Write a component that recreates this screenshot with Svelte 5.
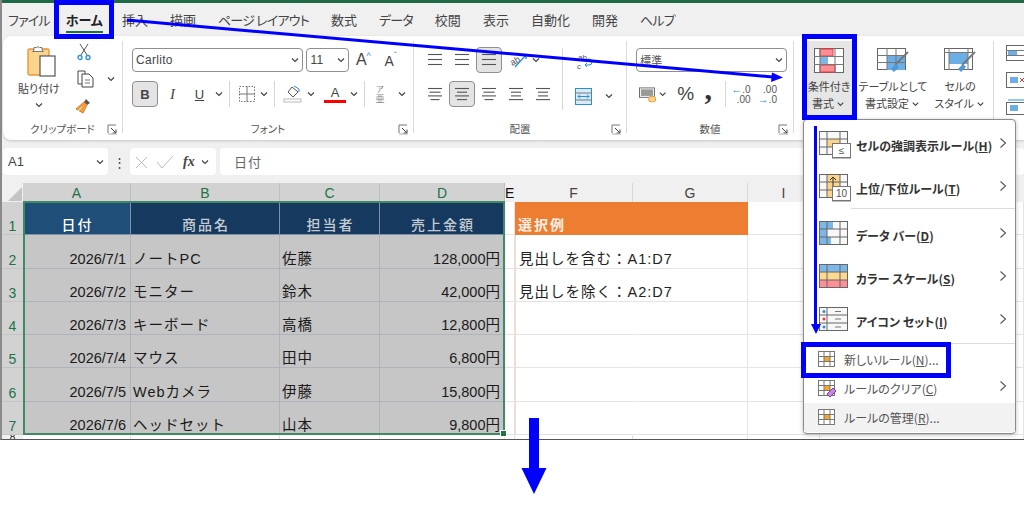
<script lang="ts">
  const tabs = ['ファイル', 'ホーム', '挿入', '描画', 'ページ レイアウト', '数式', 'データ', '校閲', '表示', '自動化', '開発', 'ヘルプ'];
  const kanaTabs = ['ファイル', 'ページ レイアウト', 'データ', 'ヘルプ'];
  const columns = [
    { name: 'A', selected: true },
    { name: 'B', selected: true },
    { name: 'C', selected: true },
    { name: 'D', selected: true },
    { name: 'E', selected: false },
    { name: 'F', selected: false },
    { name: 'G', selected: false },
    { name: 'I', selected: false }
  ];
  const rows = [
    ['2026/7/1', 'ノートPC', '佐藤', '128,000円', '見出しを含む：A1:D7'],
    ['2026/7/2', 'モニター', '鈴木', '42,000円', '見出しを除く：A2:D7'],
    ['2026/7/3', 'キーボード', '高橋', '12,800円', ''],
    ['2026/7/4', 'マウス', '田中', '6,800円', ''],
    ['2026/7/5', 'Webカメラ', '伊藤', '15,800円', ''],
    ['2026/7/6', 'ヘッドセット', '山本', '9,800円', '']
  ];
  const heads = ['日付', '商品名', '担当者', '売上金額'];
  const menuTop = [
    { label: 'セルの強調表示ルール', key: 'H', kind: 'highlight' },
    { label: '上位/下位ルール', key: 'T', kind: 'top', rule: true },
    { label: 'データ バー', key: 'D', kind: 'bars' },
    { label: 'カラー スケール', key: 'S', kind: 'scale' },
    { label: 'アイコン セット', key: 'I', kind: 'icons' }
  ];
  const menuBottom = [
    { label: 'ルールのクリア', key: 'C', suffix: '', sub: true, kind: 'clear' },
    { label: 'ルールの管理', key: 'R', suffix: '...', sub: false, kind: 'manage', hover: true }
  ];
</script>

{#snippet chev(w = 12)}
  <svg class="chev" width={w} height="10" viewBox="0 0 12 10"><path d="M3 3.5 6 6.5 9 3.5" fill="none" stroke="#444" stroke-width="1.2" /></svg>
{/snippet}

{#snippet launcher()}
  <svg class="launcher" width="11" height="11" viewBox="0 0 11 11"><path d="M1 9V1h8" fill="none" stroke="#777" /><path d="M4 4l5 5M9 5.5V9H5.5" fill="none" stroke="#444" /><path d="M1 10h9" stroke="#aaa" /></svg>
{/snippet}

{#snippet lines(widths: number[], active = false)}
  <span class="tool square" class:active>
    <svg width="18" height="16" viewBox="0 0 18 16">
      {#each widths as w, i}
        <path d="M{(18 - w) / 2} {2.5 + i * (widths.length === 3 ? 5 : 3.7)}h{w}" stroke="#555" stroke-width="1.1" />
      {/each}
    </svg>
  </span>
{/snippet}

{#snippet sheet(kind: string)}
  <svg width="29" height="24" viewBox="0 0 29 24">
    <rect x="0.5" y="0.5" width="28" height="23" fill="#f8f8f8" stroke="#666" />
    {#if kind === 'highlight'}<rect x="8" y="8" width="13" height="8" fill="#fbd38a" />{/if}
    {#if kind === 'top'}<rect x="8" y="1" width="13" height="22" fill="#fbd38a" />{/if}
    {#if kind === 'bars'}
      <rect x="1" y="1" width="13" height="7" fill="#7db7e8" /><rect x="1" y="8" width="7" height="8" fill="#7db7e8" /><rect x="1" y="16" width="11" height="7" fill="#7db7e8" />
    {/if}
    {#if kind === 'scale'}
      <rect x="1" y="1" width="27" height="7" fill="#7db7e8" /><rect x="1" y="8" width="27" height="8" fill="#fbd98f" /><rect x="1" y="16" width="27" height="7" fill="#ff8f96" />
    {/if}
    <path d="M0 8h29M0 16h29M8 0v24M21 0v24" stroke="#666" stroke-width="1" fill="none" />
    {#if kind === 'icons'}
      <rect x="1" y="1" width="27" height="22" fill="#f8f8f8" />
      <path d="M0 8h29M0 16h29M8 0v24" stroke="#666" fill="none" />
      <circle cx="5" cy="4.5" r="1.5" fill="#2b8fd8" /><circle cx="5" cy="12" r="1.5" fill="#e8383d" /><circle cx="5" cy="20" r="1.5" fill="#2b8fd8" />
      <path d="M16 4.5h6M16 12h6M16 20h6" stroke="#777" />
    {/if}
    {#if kind === 'top'}<path d="M14 13V3M11 6l3-3 3 3" stroke="#333" fill="none" />{/if}
  </svg>
{/snippet}

{#snippet smallSheet(kind: string)}
  <svg width="20" height="18" viewBox="0 0 20 18">
    <rect x="0.5" y="0.5" width="16" height="15" fill="#fff" stroke="#777" />
    <rect x="6" y="5.5" width="6" height="5" fill="#f5a623" />
    <path d="M0 5.5h17M0 10.5h17M6 0v16M12 0v16" stroke="#777" fill="none" />
    {#if kind === 'clear'}<path d="M9 14l6-6 3 3-6 6z" fill="#c58ae0" stroke="#7a3aa5" />{/if}
  </svg>
{/snippet}

<div class="page">
  <div class="window">
    <div class="accent"></div>
    <nav class="tabs">
      {#each tabs as tab}
        <span class="tab" class:current={tab === 'ホーム'} class:kana={kanaTabs.includes(tab)}>{tab}</span>
      {/each}
    </nav>

    <div class="ribbon">
      <section class="group clipboard">
        <div class="body clip-body">
          <div class="paste">
            <svg class="paste-icon" width="29" height="34" viewBox="0 0 29 34">
              <rect x="1" y="5" width="21" height="26" rx="1.5" fill="#fbd38a" stroke="#e8973a" stroke-width="1.4" />
              <path d="M7 6V3.5h2.5a2 2 0 0 1 3 0H15V6l1.500 1.500h-11z" fill="#fff" stroke="#777" />
              <rect x="13" y="12" width="15" height="20" fill="#fff" stroke="#555" stroke-width="1.2" />
            </svg>
            <span class="label">貼り付け</span>
            {@render chev()}
          </div>
          <div class="clip-tools">
            <svg width="14" height="18" viewBox="0 0 14 18"><path d="M3 1l7 11M11 1L4 12" stroke="#555" fill="none" /><circle cx="3" cy="14.5" r="2" fill="none" stroke="#2b8fd8" stroke-width="1.3" /><circle cx="11" cy="14.5" r="2" fill="none" stroke="#2b8fd8" stroke-width="1.3" /></svg>
            <span class="copy">
              <svg width="18" height="18" viewBox="0 0 18 18"><path d="M5 14H1V1h7v3" fill="#fff" stroke="#444" /><path d="M5 4h7l4 4v9H5z" fill="#fff" stroke="#444" /><path d="M8 10h5M8 13h5" stroke="#777" /></svg>
              {@render chev()}
            </span>
            <svg width="18" height="17" viewBox="0 0 18 17"><path d="M11 2l4 4-3 2-3-3z" fill="#555" /><path d="M9 5l3 3-4 8-7-4z" fill="#f0a040" stroke="#e07b20" /><path d="M3 14l4-4" stroke="#fff" /></svg>
          </div>
        </div>
        <footer><span>クリップボード</span>{@render launcher()}</footer>
      </section>

      <section class="group font">
        <div class="body stack">
          <div class="row">
            <span class="select font-name"><b>Carlito</b>{@render chev()}</span>
            <span class="select font-size"><b>11</b>{@render chev()}</span>
            <span class="grow"><i class="big">A</i><em>^</em></span>
            <span class="grow shrink"><i>A</i><em>ˇ</em></span>
          </div>
          <div class="row tools">
            <span class="tool square active bold">B</span>
            <span class="tool w27 italic">I</span>
            <span class="tool w27 under">U</span>
            {@render chev()}
            <span class="vsep"></span>
            <svg class="gap" width="18" height="18" viewBox="0 0 18 18"><rect x="1.5" y="1.5" width="15" height="15" fill="none" stroke="#777" stroke-dasharray="1.5 1.5" /><path d="M9 1v16M1 9h16" stroke="#777" /></svg>
            {@render chev()}
            <span class="vsep"></span>
            <svg class="gap" width="20" height="18" viewBox="0 0 20 18"><path d="M9 2l6 5-5 5-5-5z" fill="#fff" stroke="#555" /><path d="M11 1l5 3v3" fill="none" stroke="#2b8fd8" /><rect x="1" y="14" width="17" height="3" fill="#fff" stroke="#bbb" /></svg>
            {@render chev()}
            <span class="color-a">A</span>
            {@render chev()}
            <span class="vsep"></span>
            <span class="furi"><small>ア</small>亜</span>
            {@render chev()}
          </div>
        </div>
        <footer><span>フォント</span>{@render launcher()}</footer>
      </section>

      <section class="group align">
        <div class="body align-body">
          <div class="stack">
            <div class="row lines-row">
              {@render lines([14, 14, 14])}
              {@render lines([14, 14, 14])}
              {@render lines([14, 14, 14], true)}
              <svg class="angle" width="20" height="18" viewBox="0 0 20 18"><text x="1" y="13" font-size="9" fill="#555" font-family="Liberation Sans" transform="rotate(-30 6 10)">ab</text><path d="M6 16L17 4M13 4h4v4" fill="none" stroke="#2b8fd8" stroke-width="1.3" /></svg>
              {@render chev()}
            </div>
            <div class="row lines-row tools">
              {@render lines([14, 11, 14, 9])}
              {@render lines([14, 10, 14, 10], true)}
              {@render lines([14, 11, 14, 9])}
              {@render lines([14, 10, 10, 14])}
              {@render lines([14, 10, 10, 14])}
            </div>
          </div>
          <span class="vsep tall"></span>
          <div class="stack wrap-col">
            <svg width="20" height="18" viewBox="0 0 20 18"><text x="3" y="8" font-size="8" fill="#555" font-family="Liberation Sans">ab</text><text x="2" y="17" font-size="8" fill="#555" font-family="Liberation Sans">c</text><path d="M10 13h4a3 3 0 0 0 0-6h-1M12 11l-2 2 2 2" fill="none" stroke="#2b8fd8" /></svg>
            <div class="row merge">
              <svg width="17" height="17" viewBox="0 0 17 17"><rect x="0.5" y="0.5" width="16" height="16" fill="#d7ecfb" stroke="#2b8fd8" /><path d="M0 5h17M0 12h17" stroke="#777" /><path d="M3 8.5h11M5 6.5l-2 2 2 2M12 6.5l2 2-2 2" fill="none" stroke="#2b8fd8" /></svg>
              {@render chev()}
            </div>
          </div>
        </div>
        <footer><span>配置</span>{@render launcher()}</footer>
      </section>

      <section class="group number">
        <div class="body stack">
          <span class="select num-format"><b>標準</b>{@render chev()}</span>
          <div class="row tools num-tools">
            <svg width="19" height="17" viewBox="0 0 19 17"><rect x="0.5" y="1.5" width="16" height="10" fill="#fff" stroke="#666" /><rect x="2" y="3" width="13" height="7" fill="#999" /><ellipse cx="14" cy="12" rx="3.5" ry="1.5" fill="#fbd38a" stroke="#e8973a" /><path d="M10.5 12v3.5c0 1 7 1 7 0V12" fill="#fbd38a" stroke="#e8973a" /></svg>
            {@render chev()}
            <span class="percent">%</span>
            <span class="comma">,</span>
            <span class="vsep"></span>
            <span class="decimal"><u>←</u><b>.0</b><b class="line2">.00</b></span>
            <span class="decimal"><b class="line2">.00</b><u>→</u><b>.0</b></span>
          </div>
        </div>
        <footer><span>数値</span>{@render launcher()}</footer>
      </section>

      <section class="group styles">
        <div class="style-btn cond">
          <svg width="31" height="26" viewBox="0 0 31 26"><rect x="0.5" y="0.5" width="29" height="24" fill="#fff" stroke="#666" /><rect x="6" y="1" width="13" height="7" fill="#ff8f96" stroke="#e8383d" /><rect x="6" y="9" width="8" height="7" fill="#7db7e8" /><rect x="6" y="17" width="15" height="7" fill="#ff8f96" stroke="#e8383d" /><path d="M0 8.500h30M0 16.500h30M6 0v25M21 0v25" stroke="#777" fill="none" /></svg>
          <span class="label">条件付き<br />書式{@render chev(11)}</span>
        </div>
        <div class="style-btn table">
          <svg width="33" height="26" viewBox="0 0 33 26"><rect x="0.500" y="0.500" width="28" height="21" fill="#fff" stroke="#666" /><rect x="10" y="7" width="18" height="15" fill="#6caee6" /><path d="M0 7.500h29M0 14.500h29M10 0v22M19 0v22" stroke="#777" fill="none" /><path d="M31 4L18 17" stroke="#777" stroke-width="2" /><path d="M19 16l-5 5 3 3 5-5z" fill="#4c9ad8" /></svg>
          <span class="label">テーブルとして<br />書式設定{@render chev(11)}</span>
        </div>
        <div class="style-btn cell-style">
          <svg width="33" height="26" viewBox="0 0 33 26"><rect x="0.500" y="0.500" width="28" height="21" fill="#fff" stroke="#666" /><rect x="5" y="4" width="19" height="12" fill="#6caee6" /><path d="M0 4.500h29M5 0v22M24 0v22" stroke="#777" fill="none" /><path d="M31 4L18 17" stroke="#777" stroke-width="2" /><path d="M19 16l-5 5 3 3 5-5z" fill="#4c9ad8" /></svg>
          <span class="label">セルの<br />スタイル{@render chev(11)}</span>
        </div>
      </section>

      <section class="group cells">
        <svg width="20" height="16" viewBox="0 0 20 16"><rect x="0.500" y="0.500" width="20" height="15" fill="#fff" stroke="#666" /><rect x="2" y="5" width="9" height="5" fill="#6caee6" /><path d="M0 5.500h20M0 10.500h20" stroke="#777" /></svg>
        <svg width="20" height="16" viewBox="0 0 20 16"><rect x="0.500" y="0.500" width="20" height="15" fill="#fff" stroke="#666" /><rect x="4" y="5" width="8" height="6" fill="#6caee6" /><path d="M14 6l4 4M18 6l-4 4" stroke="#e8383d" /></svg>
        <svg width="20" height="16" viewBox="0 0 20 16"><rect x="0.500" y="3.500" width="20" height="12" fill="#fff" stroke="#666" /><rect x="4" y="6" width="8" height="6" fill="#6caee6" /><path d="M2 1h16" stroke="#2b8fd8" /></svg>
      </section>
    </div>

    <div class="formula">
      <div class="namebox"><span>A1</span>{@render chev(14)}</div>
      <span class="dots">⋮</span>
      <div class="fx-box">
        <svg width="15" height="14" viewBox="0 0 15 14"><path d="M2 2l11 11M13 2L2 13" stroke="#bbb" fill="none" /></svg>
        <svg width="18" height="14" viewBox="0 0 18 14"><path d="M1 7l5 6L17 1" stroke="#bbb" fill="none" /></svg>
        <i>fx</i>
        {@render chev()}
      </div>
      <div class="input">日付</div>
    </div>

    <div class="sheet">
      <div class="corner"><span></span></div>
      {#each columns as col}
        <div class="col-head" class:selected={col.selected} class:narrow={col.name === 'E'}>{col.name}</div>
      {/each}
      <div class="filler-head"></div>

      <div class="row-head selected">1</div>
      {#each heads as head}
        <div class="cell title" class:first={head === '日付'}>{head}</div>
      {/each}
      <div class="cell plain"></div>
      <div class="cell example">選択例</div>
      <div class="cell plain"></div>
      <div class="cell plain"></div>

      {#each rows as row, i}
        <div class="row-head selected">{i + 2}</div>
        <div class="cell sel num">{row[0]}</div>
        <div class="cell sel text">{row[1]}</div>
        <div class="cell sel text">{row[2]}</div>
        <div class="cell sel num">{row[3]}</div>
        <div class="cell plain"></div>
        <div class="cell plain text note">{row[4]}</div>
        <div class="cell plain"></div>
        <div class="cell plain"></div>
        <div class="cell plain"></div>
      {/each}

      <div class="row-head last">8</div>
      {#each Array(9) as _}
        <div class="cell plain last"></div>
      {/each}

      <div class="selection"><span class="handle"></span></div>
    </div>
  </div>

  <div class="menu">
    {#each menuTop as item}
      <div class="menu-item big" class:ruled={item.rule}>
        <span class="menu-icon">
          {@render sheet(item.kind)}
          {#if item.kind === 'highlight'}<span class="badge">≤</span>{/if}
          {#if item.kind === 'top'}<span class="badge">10</span>{/if}
        </span>
        <span class="menu-label">{item.label}(<u>{item.key}</u>)</span>
        <svg class="sub" width="8" height="12" viewBox="0 0 8 12"><path d="M1.500 1.500 6.500 6 1.500 10.500" fill="none" stroke="#555" stroke-width="1.100" /></svg>
      </div>
    {/each}
    <div class="menu-item small first-small">
      <span class="menu-icon-small">{@render smallSheet('new')}</span>
      <span>新しいルール(<u>N</u>)...</span>
    </div>
    {#each menuBottom as item}
      <div class="menu-item small" class:hover={item.hover}>
        <span class="menu-icon-small">{@render smallSheet(item.kind)}</span>
        <span>{item.label}(<u>{item.key}</u>){item.suffix}</span>
        {#if item.sub}
          <svg class="sub" width="8" height="12" viewBox="0 0 8 12"><path d="M1.500 1.500 6.500 6 1.500 10.500" fill="none" stroke="#555" stroke-width="1.100" /></svg>
        {/if}
      </div>
    {/each}
  </div>

  <!-- annotations drawn on top of the screenshot -->
  <span class="mark mark-home"></span>
  <span class="mark mark-cond"></span>
  <span class="mark mark-new"></span>
  <svg class="arrows" width="1024" height="521" viewBox="0 0 1024 521">
    <path d="M127 20 773 77" stroke="#0000ff" stroke-width="3" />
    <path d="M783 77.500 772 72.500 771 82z" fill="#0000ff" />
    <path d="M815.500 126V325" stroke="#0000ff" stroke-width="3" />
    <path d="M811 324h10l-5 10z" fill="#0000ff" />
    <path d="M529 418h10v52h-10z" fill="#0000ff" />
    <path d="M521.500 468h25l-12.500 26z" fill="#0000ff" />
  </svg>
</div>

<style>
  :global(body) {
    margin: 0;
    background: #fff;
  }

  .page {
    position: relative;
    width: 1024px;
    height: 521px;
    overflow: hidden;
    font-family: 'Noto Sans CJK JP', 'Noto Sans', sans-serif;
    color: #333;
  }

  .window {
    height: 440px;
    box-sizing: border-box;
    background: #f0f0f0;
    border-left: 2px solid #8a8a8a;
    border-bottom: 1px solid #555;
    overflow: hidden;
  }

  .accent {
    height: 3px;
    background: #1e6b45;
  }

  .tabs {
    display: flex;
    align-items: center;
    gap: 22px;
    height: 33px;
    padding-left: 6px;
    font-size: 13px;
    font-feature-settings: 'palt';
    color: #444;
  }

  .tab {
    position: relative;
    line-height: 30px;
  }

  .tab.kana {
    letter-spacing: -0.8px;
  }

  .tab.current {
    font-weight: 700;
    color: #222;
    margin: 0 -3px 0 -6px;
  }

  .tab.current::after {
    content: '';
    position: absolute;
    left: 0;
    right: 0;
    bottom: 2px;
    height: 2px;
    background: #1e7145;
  }

  .ribbon {
    display: flex;
    height: 104px;
    margin-left: 1px;
    background: #fff;
    border-radius: 8px 0 0 8px;
    box-shadow: 0 1px 3px rgba(0, 0, 0, 0.18);
    font-feature-settings: 'palt';
  }

  .group {
    position: relative;
    box-sizing: border-box;
    flex: none;
    height: 92px;
    margin-top: 5px;
    border-right: 1px solid #dcdcdc;
  }

  .group footer {
    position: absolute;
    left: 0;
    right: 0;
    bottom: -4px;
    text-align: center;
    font-size: 10.500px;
    line-height: 16px;
    color: #555;
  }

  .launcher {
    position: absolute;
    right: 4px;
    top: 3px;
  }

  .clipboard {
    width: 120px;
  }

  .clip-body {
    display: flex;
    padding-left: 15px;
    gap: 15px;
  }

  .paste {
    display: flex;
    flex-direction: column;
    align-items: center;
    padding-top: 3px;
  }

  .paste-icon {
    margin-left: 5px;
  }

  .paste .label {
    font-size: 11px;
    line-height: 14px;
    margin-top: 3px;
    color: #444;
  }

  .paste .chev {
    margin-top: 5px;
  }

  .clip-tools {
    display: flex;
    flex-direction: column;
    align-items: flex-start;
    gap: 9px;
    padding-top: 2px;
  }

  .clip-tools svg:first-child {
    margin-left: 2px;
  }

  .copy {
    display: flex;
    align-items: center;
    gap: 10px;
  }

  .font {
    width: 291px;
    padding-left: 9px;
  }

  .font .body,
  .number .body,
  .align-body {
    padding-top: 7px;
  }

  .stack {
    display: flex;
    flex-direction: column;
    gap: 9px;
  }

  .row {
    display: flex;
    align-items: center;
    height: 24px;
  }

  .row.tools {
    height: 26px;
  }

  .select {
    display: flex;
    align-items: center;
    justify-content: space-between;
    box-sizing: border-box;
    height: 24px;
    padding: 0 1px 0 3px;
    border: 1px solid #8f8f8f;
    border-radius: 4px;
    background: #fff;
  }

  .select b {
    font: 400 12px 'Liberation Sans', sans-serif;
    color: #444;
    letter-spacing: 0.300px;
  }

  .font-name {
    width: 174px;
    margin-right: 3px;
  }

  .font-size {
    width: 43px;
  }

  .grow {
    display: flex;
    align-items: flex-start;
    width: 29px;
    margin-left: 7px;
    font-family: 'Liberation Sans', sans-serif;
  }

  .grow.shrink {
    margin-left: 0;
  }

  .grow i {
    font-style: normal;
    font-size: 14px;
    line-height: 20px;
    margin-top: 2px;
    color: #444;
  }

  .grow i.big {
    font-size: 16px;
    margin-top: 0;
  }

  .grow em {
    font-style: normal;
    font-size: 9px;
    line-height: 12px;
    color: #2b8fd8;
  }

  .tool {
    display: inline-flex;
    align-items: center;
    justify-content: center;
    box-sizing: border-box;
    height: 26px;
    flex: none;
    font-family: 'Liberation Sans', sans-serif;
    font-size: 13px;
    color: #444;
  }

  .square {
    width: 26px;
    border: 1px solid transparent;
    border-radius: 4px;
  }

  .square.active {
    background: #e4e4e4;
    border-color: #8f8f8f;
  }

  .w27 {
    width: 27px;
  }

  .bold {
    font-weight: 700;
  }

  .italic {
    font-style: italic;
    font-family: 'Liberation Serif', serif;
    font-size: 15px;
    margin-left: 1px;
  }

  .under {
    text-decoration: underline;
  }

  .vsep {
    flex: none;
    width: 1px;
    height: 26px;
    margin: 0 5px 0 4px;
    background: #d6d6d6;
  }

  .vsep.tall {
    height: 62px;
    margin: 0 12px 0 6px;
  }

  .gap {
    margin-left: 3px;
    margin-right: 2px;
  }

  .color-a {
    box-sizing: border-box;
    width: 22px;
    margin-left: 7px;
    margin-right: 2px;
    text-align: center;
    font: 13px/15px 'Liberation Sans', sans-serif;
    color: #444;
    border-bottom: 3px solid #ff0000;
  }

  .furi {
    display: flex;
    flex-direction: column;
    align-items: center;
    width: 20px;
    margin: 0 6px 0 0;
    font-size: 9px;
    line-height: 10px;
    color: #888;
  }

  .furi small {
    font-size: 8px;
  }

  .align {
    width: 213px;
    padding-left: 8px;
  }

  .align-body {
    display: flex;
    align-items: flex-start;
  }

  .lines-row {
    gap: 1px;
  }

  .angle {
    margin-left: 6px;
  }

  .wrap-col {
    padding-top: 4px;
    gap: 14px;
  }

  .merge {
    gap: 11px;
  }

  .number {
    width: 167px;
    padding: 0 9px;
  }

  .num-format {
    width: 151px;
  }

  .num-format b {
    font-family: 'Noto Sans CJK JP', sans-serif;
    font-size: 11px;
    color: #555;
  }

  .num-tools {
    padding-left: 3px;
  }

  .percent {
    margin-left: 9px;
    width: 29px;
    font: 19px 'Liberation Sans', sans-serif;
    color: #444;
  }

  .comma {
    width: 18px;
    font: 700 30px/16px 'Liberation Serif', serif;
    color: #333;
    padding-bottom: 10px;
  }

  .decimal {
    display: grid;
    grid-template-columns: auto auto;
    justify-content: end;
    row-gap: 1px;
    width: 20px;
    margin-right: 7px;
    font: 10px/9px 'Liberation Sans', sans-serif;
  }

  .decimal b {
    font-weight: 400;
    color: #555;
  }

  .decimal u {
    text-decoration: none;
    color: #2b8fd8;
    font-size: 11px;
    line-height: 9px;
  }

  .decimal .line2 {
    grid-column: 1 / 3;
    text-align: right;
  }

  .styles {
    display: flex;
    width: 200px;
    padding-left: 10px;
  }

  .style-btn {
    display: flex;
    flex-direction: column;
    align-items: center;
    gap: 4px;
    width: 50px;
    padding-top: 7px;
    font-size: 11px;
    line-height: 17px;
    color: #444;
    white-space: nowrap;
  }

  .style-btn.table {
    width: 72px;
    margin-left: 3px;
  }

  .style-btn.cell-style {
    width: 62px;
  }

  .style-btn.cond {
    box-sizing: border-box;
    background: #e6e6e6;
    height: 74px;
  }

  .style-btn .label {
    text-align: center;
  }

  .style-btn .chev {
    vertical-align: -1px;
    margin-left: 1px;
  }

  .cells {
    display: flex;
    flex-direction: column;
    gap: 11px;
    padding: 4px 0 0 12px;
    border: 0;
    min-width: 30px;
  }

  .formula {
    display: flex;
    align-items: center;
    gap: 4px;
    height: 27px;
    margin-top: 8px;
    padding-left: 1px;
  }

  .namebox,
  .fx-box,
  .input {
    display: flex;
    align-items: center;
    height: 27px;
    box-sizing: border-box;
    background: #fff;
    border-radius: 4px;
  }

  .namebox {
    justify-content: space-between;
    width: 105px;
    padding: 0 1px 0 5px;
    font: 13px 'Liberation Sans', sans-serif;
    color: #444;
  }

  .dots {
    width: 14px;
    text-align: center;
    font-size: 13px;
    color: #444;
  }

  .fx-box {
    width: 86px;
    padding-left: 4px;
    gap: 7px;
  }

  .fx-box i {
    font: italic 700 14px 'Liberation Serif', serif;
    color: #444;
    margin: 0 -3px 0 2px;
  }

  .input {
    flex: 1;
    padding-left: 14px;
    font-size: 13px;
    letter-spacing: 1px;
    color: #666;
  }

  .sheet {
    position: relative;
    display: grid;
    grid-template-columns: 21px 108px 149px 100px 125px 10px 118px 115px 72px 1fr;
    grid-template-rows: 19px repeat(7, 33.300px) 1fr;
    height: 257px;
    margin-top: 8px;
    background: #fff;
    font-family: 'Liberation Sans', 'Noto Sans CJK JP', sans-serif;
    font-size: 14.500px;
    color: #222;
  }

  .corner {
    position: relative;
    background: #f0f0f0;
  }

  .corner span {
    position: absolute;
    right: 1px;
    bottom: 1px;
    border-style: solid;
    border-width: 0 0 14px 14px;
    border-color: transparent transparent #c4c4c4 transparent;
  }

  .col-head {
    display: flex;
    align-items: center;
    justify-content: center;
    background: #f0f0f0;
    border-right: 1px solid #d8d8d8;
    font-size: 14px;
    color: #444;
  }

  .col-head.selected {
    background: #d2d2d2;
    color: #217346;
    border-right-color: #bfbfbf;
  }

  .col-head.narrow {
    color: #111;
    justify-content: flex-start;
    border-right: 0;
  }

  .filler-head {
    background: #f0f0f0;
  }

  .row-head {
    display: flex;
    align-items: flex-end;
    justify-content: center;
    box-sizing: border-box;
    background: #f0f0f0;
    border-bottom: 1px solid #c4c4c4;
    font-size: 14px;
  }

  .row-head.selected {
    background: #d2d2d2;
    color: #217346;
  }

  .cell {
    display: flex;
    align-items: flex-end;
    box-sizing: border-box;
    padding: 0 3px 0 2px;
    line-height: 17px;
    white-space: nowrap;
    overflow: hidden;
    border-right: 1px solid #e4e4e4;
    border-bottom: 1px solid #e4e4e4;
  }

  .cell.title {
    justify-content: center;
    padding-left: 5px;
    background: #163a5f;
    border-color: #7f93a8;
    color: #c4cad0;
    font-family: 'Noto Sans CJK JP', sans-serif;
    font-size: 14px;
    line-height: 19px;
    font-weight: 500;
    letter-spacing: 2px;
  }

  .cell.title.first {
    background: #1f4e79;
    color: #fff;
  }

  .cell.example {
    grid-column: 7 / 9;
    background: #ed7d31;
    border-color: #ed7d31;
    color: #fdf0e6;
    font-family: 'Noto Sans CJK JP', sans-serif;
    font-size: 14px;
    line-height: 19px;
    font-weight: 700;
    padding-left: 3px;
    letter-spacing: 2px;
  }

  .cell.sel {
    background: #c6c6c6;
    border-color: #adb4bb;
    color: #1a1a1a;
  }

  .cell.num {
    justify-content: flex-end;
    padding-right: 4px;
  }

  .cell.text {
    letter-spacing: 1px;
  }

  .cell.note {
    padding-left: 3px;
    border-left: 1px solid #f8d8c0;
    overflow: visible;
    border-right-color: transparent;
  }

  .cell.last {
    border: 0;
    border-right: 1px solid #e4e4e4;
  }

  .row-head.last {
    align-items: flex-start;
    border: 0;
    font-size: 10px;
    line-height: 5px;
    overflow: hidden;
    color: #222;
  }

  .selection {
    position: absolute;
    left: 21px;
    top: 18px;
    width: 482px;
    height: 234px;
    box-sizing: border-box;
    border: 2px solid #3f8a64;
    pointer-events: none;
  }

  .handle {
    position: absolute;
    right: -4px;
    bottom: -4px;
    width: 5px;
    height: 5px;
    background: #217346;
    border: 1px solid #fff;
  }

  .menu {
    position: absolute;
    left: 803px;
    top: 119px;
    box-sizing: border-box;
    width: 213px;
    height: 315px;
    padding-top: 4px;
    background: #fff;
    border: 1px solid #8c8c8c;
    border-radius: 4px;
    box-shadow: 0 1px 4px rgba(0, 0, 0, 0.25);
    font-feature-settings: 'palt';
  }

  .menu-item {
    position: relative;
    display: flex;
    align-items: center;
    padding-left: 15px;
  }

  .menu-item.big {
    height: 43px;
    font-size: 12px;
    font-weight: 700;
    color: #333;
  }

  .menu-item.ruled {
    margin-bottom: 4px;
  }

  .menu-item.ruled::after {
    content: '';
    position: absolute;
    left: 47px;
    right: 0;
    bottom: 1px;
    height: 1px;
    background: #dcdcdc;
  }

  .menu-icon {
    position: relative;
    display: flex;
    width: 37px;
    margin-top: -5px;
  }

  .badge {
    position: absolute;
    left: 13px;
    top: 12px;
    box-sizing: border-box;
    width: 19px;
    height: 15px;
    background: #fff;
    border: 1px solid #777;
    box-shadow: 0 1px 0 #bbb;
    text-align: center;
    font: 400 10px/13px 'Liberation Sans', sans-serif;
    color: #555;
  }

  .menu-label {
    white-space: nowrap;
  }

  .menu-item u {
    text-underline-offset: 1px;
  }

  .sub {
    position: absolute;
    right: 8px;
    top: 50%;
    margin-top: -9px;
  }

  .menu-item.small {
    height: 29px;
    font-size: 12px;
    color: #555;
    padding-left: 14px;
  }

  .menu-item.first-small {
    margin-top: 2px;
  }

  .first-small::before {
    content: '';
    position: absolute;
    left: 0;
    right: 0;
    top: -2px;
    height: 1px;
    background: #dcdcdc;
  }

  .menu-icon-small {
    display: flex;
    width: 26px;
  }

  .menu-item.hover {
    background: #f2f2f2;
  }

  .mark {
    position: absolute;
    box-sizing: border-box;
    border: 5px solid #0000ff;
    pointer-events: none;
  }

  .mark-home {
    left: 54px;
    top: 0;
    width: 60px;
    height: 39px;
  }

  .mark-cond {
    left: 802px;
    top: 34px;
    width: 55px;
    height: 86px;
  }

  .mark-new {
    left: 801px;
    top: 342px;
    width: 150px;
    height: 36px;
  }

  .arrows {
    position: absolute;
    inset: 0;
    pointer-events: none;
  }
</style>
